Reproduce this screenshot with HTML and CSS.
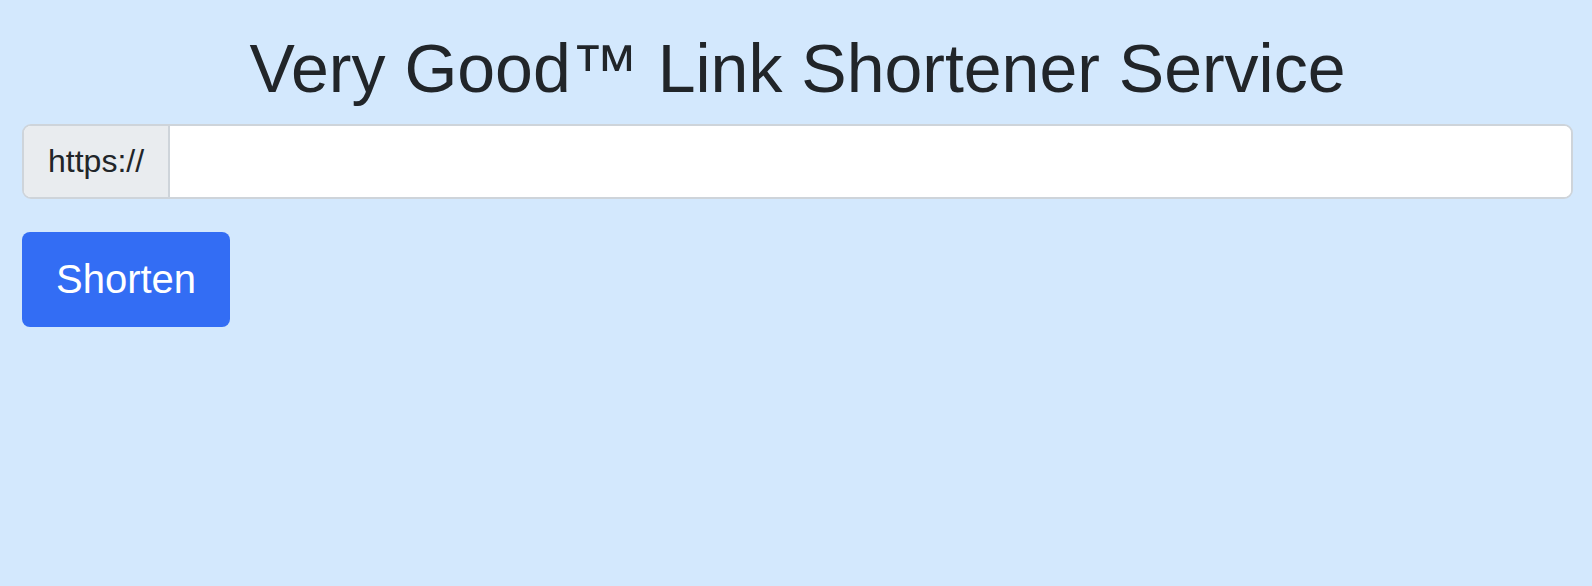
FILE: index.html
```html
<!DOCTYPE html>
<html lang="en">
<head>
<meta charset="utf-8">
<title>Very Good™ Link Shortener Service</title>
<link rel="stylesheet" href="styles.css">
</head>
<body>
<main class="page">
  <h1 class="title">Very Good™ Link Shortener Service</h1>
  <form class="shorten-form">
    <div class="input-group">
      <span class="addon">https://</span>
      <input class="url-input" type="text" aria-label="URL">
    </div>
    <button class="btn-primary" type="button">Shorten</button>
  </form>
</main>
</body>
</html>
```

FILE: styles.css
```css
html, body {
  margin: 0;
  padding: 0;
}
body {
  background: #d3e8fd;
  color: #212529;
  font-family: "Liberation Sans", Arial, Helvetica, sans-serif;
  min-height: 586px;
}
.page {
  padding: 28px 19px 0 22px;
  display: flex;
  flex-direction: column;
}
.title {
  margin: 0;
  font-size: 68px;
  font-weight: 400;
  line-height: 81px;
  text-align: center;
  color: #212529;
}
.shorten-form {
  margin-top: 15px;
  display: flex;
  flex-direction: column;
  align-items: flex-start;
  gap: 33px;
}
.input-group {
  align-self: stretch;
  display: flex;
  height: 75px;
  box-sizing: border-box;
  border: 2px solid #ced4da;
  border-radius: 9px;
  overflow: hidden;
  background: #ffffff;
}
.addon {
  display: flex;
  align-items: center;
  padding: 0 24px;
  background: #e9ecef;
  border-right: 2px solid #ced4da;
  font-size: 32px;
  color: #212529;
}
.url-input {
  flex: 1;
  border: 0;
  outline: none;
  background: #ffffff;
  font-family: inherit;
  font-size: 32px;
  padding: 0 20px;
  min-width: 0;
}
.btn-primary {
  height: 95px;
  padding: 0 34px;
  border: 0;
  border-radius: 8px;
  background: #336df4;
  color: #ffffff;
  font-family: inherit;
  font-size: 40px;
  cursor: pointer;
}
```
